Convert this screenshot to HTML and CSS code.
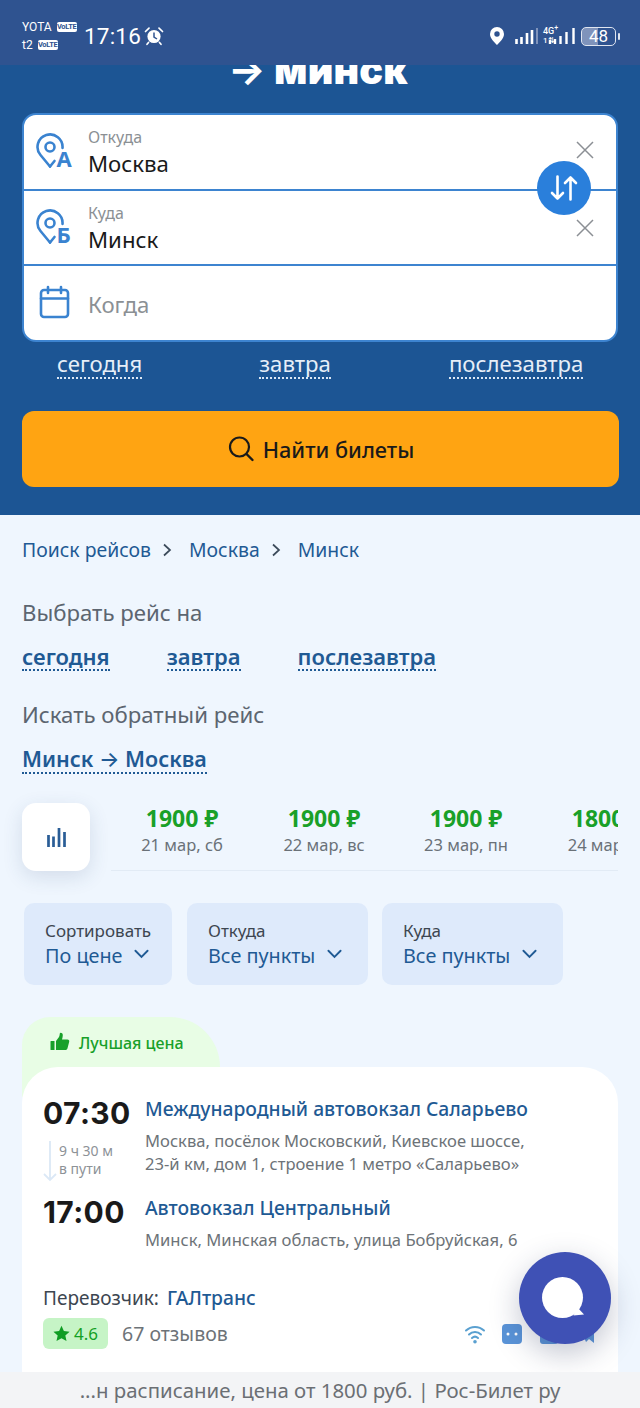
FILE: index.html
```html
<!DOCTYPE html>
<html lang="ru">
<head>
<meta charset="utf-8">
<title>Москва — Минск</title>
<link rel="stylesheet" href="styles.css">
</head>
<body>
<div class="app">
  <header class="status">
    <div class="sims">
      <div class="sim"><span>YOTA</span><b class="volte">VoLTE</b></div>
      <div class="sim"><span>t2</span><b class="volte">VoLTE</b></div>
    </div>
    <div class="clock">17:16</div>
    <svg class="alarm" width="20" height="20" viewBox="0 0 20 20"><circle cx="10" cy="10.5" r="6.6" fill="#fff"/><path d="M10 6.500v4.500l3 2" fill="none" stroke="#2f5390" stroke-width="1.500"/><path d="M1.500 5.500 5 2.200M18.500 5.500 15 2.200M4.500 16.500 3 18.300M15.500 16.500 17 18.300" stroke="#fff" stroke-width="1.700" stroke-linecap="round"/></svg>
    <div class="status-right">
      <svg class="pin" width="16" height="20" viewBox="0 0 16 20"><path fill-rule="evenodd" fill="#fff" d="M8 1a7 7 0 0 1 7 7c0 4.500-4.500 8.500-7 11-2.500-2.500-7-6.500-7-11a7 7 0 0 1 7-7Zm0 4.300a2.700 2.700 0 1 0 0 5.400 2.700 2.700 0 0 0 0-5.400Z"/></svg>
      <svg width="24" height="18" viewBox="0 0 24 18"><path stroke="#fff" stroke-width="2.600" d="M2.500 17v-5M7.500 17v-7M13 17V6M18 17V3"/><path stroke="#7f93bb" stroke-width="2" d="M23 17V1"/></svg>
      <div class="net"><span>4G<sup>+</sup></span><span class="net-sub">1⇅</span></div>
      <svg class="bars" width="28" height="18" viewBox="0 0 28 18"><path stroke="#fff" stroke-width="2.400" d="M3 17v-4M8 17v-5M13.500 17V9M19.500 17V5M26.500 17V1"/></svg>
      <div class="battery"><span>48</span></div><i class="battery-tip"></i>
    </div>
  </header>

  <main class="main">
    <section class="hero">
      <h1 class="hero-title"><span class="hero-arrow">→</span> минск</h1>
      <div class="search-box">
        <div class="field field-from">
          <svg class="pin-icon" width="40" height="44" viewBox="0 0 40 44"><path d="M14 33.500 4.500 22A12.500 12.500 0 1 1 26.500 15" fill="none" stroke="#3a83d0" stroke-width="2.600" stroke-linejoin="round" stroke-linecap="round"/><circle cx="14" cy="14" r="4.500" fill="none" stroke="#3a83d0" stroke-width="2.600"/><path d="m14 33.500 4.500-5.500" stroke="#3a83d0" stroke-width="2.600" stroke-linecap="round"/><text x="20.500" y="34" class="field-letter">А</text></svg>
          <div class="field-text"><div class="field-label">Откуда</div><div class="field-value">Москва</div></div>
          <svg class="clear" width="20" height="20" viewBox="0 0 20 20"><path d="m2 2 16 16M18 2 2 18" stroke="#8b8f94" stroke-width="1.500"/></svg>
        </div>
        <div class="field">
          <svg class="pin-icon" width="40" height="44" viewBox="0 0 40 44"><path d="M14 33.500 4.500 22A12.500 12.500 0 1 1 26.500 15" fill="none" stroke="#3a83d0" stroke-width="2.600" stroke-linejoin="round" stroke-linecap="round"/><circle cx="14" cy="14" r="4.500" fill="none" stroke="#3a83d0" stroke-width="2.600"/><path d="m14 33.500 4.500-5.500" stroke="#3a83d0" stroke-width="2.600" stroke-linecap="round"/><text x="20.500" y="34" class="field-letter">Б</text></svg>
          <div class="field-text"><div class="field-label">Куда</div><div class="field-value">Минск</div></div>
          <svg class="clear" width="20" height="20" viewBox="0 0 20 20"><path d="m2 2 16 16M18 2 2 18" stroke="#8b8f94" stroke-width="1.500"/></svg>
        </div>
        <div class="field field-when">
          <svg class="field-icon" width="38" height="38" viewBox="0 0 38 38"><rect x="5" y="6" width="27" height="27" rx="3" fill="none" stroke="#3a83d0" stroke-width="2.600"/><path d="M5 14.500h27M12 3v6M25 3v6" stroke="#3a83d0" stroke-width="2.600" stroke-linecap="round"/></svg>
          <div class="field-placeholder">Когда</div>
        </div>
        <button class="swap" type="button" aria-label="Поменять">
          <svg width="30" height="30" viewBox="0 0 30 30"><path d="M8.500 3.500v22M3 20l5.500 5.500L14 20M21.500 26.500V4.500M16 10l5.500-5.500L27 10" fill="none" stroke="#fff" stroke-width="2.600" stroke-linecap="round" stroke-linejoin="round"/></svg>
        </button>
      </div>
      <div class="quick">
        <a class="quick-link">сегодня</a><a class="quick-link">завтра</a><a class="quick-link">послезавтра</a>
      </div>
      <button class="find" type="button">
        <svg width="28" height="28" viewBox="0 0 28 28"><circle cx="12.500" cy="12" r="9.500" fill="none" stroke="#1a1a1a" stroke-width="2.200"/><path d="m19.500 19 6 6" stroke="#1a1a1a" stroke-width="2.400" stroke-linecap="round"/></svg>
        <span>Найти билеты</span>
      </button>
    </section>

    <section class="content">
      <nav class="crumbs">
        <a>Поиск рейсов</a>
        <svg width="10" height="14" viewBox="0 0 10 14"><path d="m2 1.500 6 5.500-6 5.500" fill="none" stroke="#3b4a5a" stroke-width="1.700"/></svg>
        <a>Москва</a>
        <svg width="10" height="14" viewBox="0 0 10 14"><path d="m2 1.500 6 5.500-6 5.500" fill="none" stroke="#3b4a5a" stroke-width="1.700"/></svg>
        <a>Минск</a>
      </nav>
      <h2 class="sub">Выбрать рейс на</h2>
      <div class="day-links"><a class="day-link">сегодня</a><a class="day-link">завтра</a><a class="day-link">послезавтра</a></div>
      <h2 class="sub sub-back">Искать обратный рейс</h2>
      <div class="day-links day-links-back"><a class="day-link day-link-back">Минск <span class="link-arrow">→</span> Москва</a></div>

      <div class="prices">
        <button class="chart" type="button" aria-label="График">
          <svg width="19" height="19" viewBox="0 0 19 19"><path d="M1.500 7v12M6.500 8.500V19M12 0v19M17.500 4v15" stroke="#2a5d96" stroke-width="2.700"/></svg>
        </button>
        <div class="price-list">
          <div class="price"><b>1900 ₽</b><span>21 мар, сб</span></div>
          <div class="price"><b>1900 ₽</b><span>22 мар, вс</span></div>
          <div class="price"><b>1900 ₽</b><span>23 мар, пн</span></div>
          <div class="price"><b>1800 ₽</b><span>24 мар, вт</span></div>
        </div>
      </div>

      <div class="filters">
        <div class="filter f1"><div class="filter-label">Сортировать</div><div class="filter-value">По цене<svg width="15" height="10" viewBox="0 0 16 10"><path d="m1.500 1.500 6.500 6.500 6.500-6.500" fill="none" stroke="#1f5a94" stroke-width="2" stroke-linecap="round"/></svg></div></div>
        <div class="filter f2"><div class="filter-label">Откуда</div><div class="filter-value">Все пункты<svg width="15" height="10" viewBox="0 0 16 10"><path d="m1.500 1.500 6.500 6.500 6.500-6.500" fill="none" stroke="#1f5a94" stroke-width="2" stroke-linecap="round"/></svg></div></div>
        <div class="filter f3"><div class="filter-label">Куда</div><div class="filter-value">Все пункты<svg width="15" height="10" viewBox="0 0 16 10"><path d="m1.500 1.500 6.500 6.500 6.500-6.500" fill="none" stroke="#1f5a94" stroke-width="2" stroke-linecap="round"/></svg></div></div>
      </div>

      <article class="offer">
        <div class="badge">
          <svg width="20" height="20" viewBox="0 0 20 20"><path fill="#18a02a" d="M1 9h3.500v9H1a.500.500 0 0 1-.500-.500v-8A.500.500 0 0 1 1 9Zm5 0 3-4c.500-1 .800-2.300.800-3.500 0-1.300 3-1 3 1.500 0 1.500-.400 3-.800 4.500h5.500c1.300 0 2 1 1.700 2.200l-1.700 6.500c-.300 1-1 1.800-2.300 1.800H6Z"/></svg>
          <span>Лучшая цена</span>
        </div>
        <div class="card">
          <div class="stop">
            <div class="time">07:30</div>
            <div class="stop-body">
              <div class="stop-name">Международный автовокзал Саларьево</div>
              <div class="stop-addr">Москва, посёлок Московский, Киевское шоссе,<br>23-й км, дом 1, строение 1 метро «Саларьево»</div>
            </div>
          </div>
          <div class="trip">
            <svg width="14" height="42" viewBox="0 0 14 42"><path d="M7 1v39M1 34l6 6 6-6" fill="none" stroke="#dbe8f6" stroke-width="1.800"/></svg>
            <div class="trip-text">9 ч 30 м<br>в пути</div>
          </div>
          <div class="stop stop-end">
            <div class="time">17:00</div>
            <div class="stop-body">
              <div class="stop-name">Автовокзал Центральный</div>
              <div class="stop-addr">Минск, Минская область, улица Бобруйская, 6</div>
            </div>
          </div>
          <div class="carrier"><span>Перевозчик:</span><a>ГАЛтранс</a></div>
          <div class="rating-row">
            <div class="rating"><svg width="17" height="17" viewBox="0 0 20 20"><path fill="#0f9d23" d="m10 1 2.800 6 6.700.800-5 4.500 1.400 6.600L10 15.500l-5.900 3.400 1.400-6.600-5-4.500L7.200 7Z"/></svg><span>4.6</span></div>
            <div class="reviews">67 отзывов</div>
            <div class="amenities">
              <svg width="24" height="22" viewBox="0 0 24 22"><path d="M3 7.500a13 13 0 0 1 18 0M6 11.500a8.500 8.500 0 0 1 12 0M9 15a4.500 4.500 0 0 1 6 0" fill="none" stroke="#5aa0d0" stroke-width="2" stroke-linecap="round"/><circle cx="12" cy="18.800" r="1.800" fill="#5aa0d0"/></svg>
              <svg width="20" height="20" viewBox="0 0 20 20"><rect width="20" height="20" rx="4" fill="#5a94d8"/><circle cx="6" cy="10" r="1.500" fill="#fff"/><circle cx="14" cy="10" r="1.500" fill="#fff"/></svg>
              <svg class="am-third" width="18" height="20" viewBox="0 0 18 20"><rect width="18" height="20" rx="3" fill="#5a94d8"/></svg>
              <svg class="am-fourth" width="12" height="20" viewBox="0 0 12 20"><path d="M0 9 12 2v17L7 15l-3 3Z" fill="#5a94d8"/></svg>
            </div>
          </div>
        </div>
      </article>
    </section>
    <button class="chat" type="button" aria-label="Чат">
      <svg width="46" height="42" viewBox="-20.500 -20.500 46 42"><circle r="20.500" fill="#fff"/><path d="M15 10l6.500 7-10.500 1Z" fill="#fff"/></svg>
    </button>
  </main>
  <footer class="page-title">...н расписание, цена от 1800 руб. | Рос-Билет ру</footer>
</div>
</body>
</html>
```
FILE: styles.css
```css
* { box-sizing: border-box; }
html, body { margin: 0; padding: 0; }
body { font-family: "Noto Sans", "Open Sans", sans-serif; background: #eff6fe; color: #1a1a1a; }
a { color: inherit; text-decoration: none; }
button { border: 0; padding: 0; font: inherit; cursor: pointer; }
h1, h2 { margin: 0; font-weight: 400; }

.app { width: 640px; height: 1408px; display: flex; flex-direction: column; overflow: hidden; }

/* status bar */
.status { height: 65px; flex: none; background: #2f5390; color: #fff; display: flex; align-items: center; padding: 7px 0 0 22px; }
.sims { width: 56px; font-family: "Roboto", sans-serif; font-size: 12px; line-height: 18px; }
.sim { display: flex; align-items: center; gap: 5px; white-space: nowrap; }
.volte { width: 20px; background: #fff; color: #2f5390; font-size: 7.500px; line-height: 10px; text-align: center; border-radius: 2px; font-weight: 700; letter-spacing: -.3px; overflow: hidden; }
.clock { font-family: "Roboto", sans-serif; font-size: 22.500px; margin-left: 6px; letter-spacing: .2px; }
.alarm { margin-left: 3px; }
.status-right { margin-left: auto; display: flex; align-items: center; padding-right: 20px; }
.pin { margin-right: 9px; }
.net { flex: none; font-family: "Roboto", sans-serif; font-size: 9px; line-height: 9px; width: 18px; margin-left: 5px; font-weight: 500; }
.net span { display: block; white-space: nowrap; }
.net sup { font-size: 7px; line-height: 0; }
.net-sub { font-size: 8px; }
.bars { margin-left: -14px; margin-right: 6px; }
.battery { width: 35px; height: 19px; border: 1.500px solid #dfe5f0; border-radius: 5px; display: flex; align-items: center; justify-content: center; font-family: "Roboto", sans-serif; font-size: 17px; background: linear-gradient(90deg, #7f93bb 48%, transparent 48%); }
.battery-tip { width: 2px; height: 7px; margin-left: 2px; background: #dfe5f0; border-radius: 1px; }

/* hero */
.main { flex: 1; min-height: 0; overflow: hidden; position: relative; }
.hero { height: 450px; background: #1c5594; padding: 0 22px; overflow: hidden; }
.hero-title { height: 48px; margin: 0; padding-left: 206px; color: #fff; font-family: "Inter", sans-serif; font-size: 39.500px; font-weight: 900; line-height: 11px; white-space: nowrap; letter-spacing: .2px; }
.hero-arrow { font-weight: 700; }

.search-box { position: relative; height: 229px; background: #fff; border: 2px solid #3d84d0; border-radius: 14px; }
.field { height: 75px; display: flex; align-items: center; padding: 0 21px 0 12px; border-bottom: 2.500px solid #3d84d0; }
.field-from { height: 76px; }
.field-when { border-bottom: 0; height: 74px; }
.field-icon { flex: none; width: 38px; height: 38px; }
.pin-icon { flex: none; width: 40px; height: 44px; margin: 6px -2px 0 0; }
.field-letter { font-family: "Noto Sans", sans-serif; font-size: 22px; font-weight: 700; fill: #3a83d0; }
.field-text { margin-left: 14px; flex: 1; padding-top: 3px; }
.field-label { font-size: 16px; line-height: 20px; color: #8b9094; }
.field-value { font-size: 22.200px; line-height: 33px; color: #1a1a1a; }
.field-placeholder { margin-left: 14px; font-size: 22.200px; padding-top: 3px; color: #8b9094; }
.clear { flex: none; }
.field-from .clear { margin-bottom: 5px; }
.swap { position: absolute; right: 25px; top: 46px; width: 54px; height: 54px; border-radius: 50%; background: #2a7fdb; display: flex; align-items: center; justify-content: center; }

.quick { display: flex; height: 69px; padding: 9px 0 0 35px; align-items: flex-start; }
.quick-link { color: #e6eef8; font-size: 22.200px; line-height: 26px; border-bottom: 2px dotted #dbe7f5; }
.quick-link:nth-child(2) { margin-left: 117px; }
.quick-link:nth-child(3) { margin-left: 118px; }

.find { width: 597px; height: 76px; background: #ffa412; border-radius: 12px; display: flex; align-items: center; justify-content: center; gap: 8px; font-size: 21.700px; color: #1a1a1a; font-weight: 500; }

/* content */
.content { padding: 0 22px; }
.crumbs { height: 68px; display: flex; align-items: center; font-size: 19.400px; color: #1f5a94; }
.crumbs svg { margin: 2px 17px 0 11px; }
.sub { font-size: 22.200px; line-height: 30px; color: #5c6570; margin-top: 15px; }
.sub-back { margin-top: 29px; }
.day-links { display: flex; gap: 57px; margin-top: 15px; height: 28px; }
.day-link { font-size: 22px; line-height: 26px; font-weight: 600; color: #1f5a94; border-bottom: 2px dotted #1f5a94; }
.day-link-back { font-size: 21.500px; white-space: nowrap; }
.link-arrow { font-family: "Inter", sans-serif; font-weight: 500; }
.day-links-back { margin-top: 16px; }

.prices { display: flex; margin-top: 29px; height: 68px; }
.chart { flex: none; width: 68px; height: 68px; background: #fff; border-radius: 14px; box-shadow: 0 6px 20px rgba(40, 70, 110, .14); display: flex; align-items: center; justify-content: center; }
.price-list { margin-left: 21px; flex: 1; display: flex; overflow: hidden; border-bottom: 1.500px solid #e2ebf5; height: 68px; }
.price { flex: none; width: 142px; display: flex; flex-direction: column; align-items: center; white-space: nowrap; }
.price b { font-size: 23px; line-height: 30px; color: #19a028; font-weight: 700; }
.price span { font-size: 16.500px; line-height: 24px; color: #6a7178; }

.filters { display: flex; margin: 32px 0 0 2px; gap: 15px; }
.filter { height: 82px; background: #deeafb; border-radius: 10px; padding: 16px 0 0 21px; }
.f1 { width: 148px; }
.f2 { width: 181px; }
.f3 { width: 181px; margin-left: -1px; }
.filter-label { font-size: 17px; line-height: 24px; color: #3d4650; }
.filter-value { font-size: 19.800px; line-height: 25px; color: #1f5a94; display: flex; align-items: center; gap: 12px; white-space: nowrap; }
.filter-value svg { margin-bottom: 4px; }

.offer { margin-top: 32px; }
.badge { width: 198px; height: 80px; margin-bottom: -30px; background: #e8fde5; border-radius: 28px 50px 0 0; display: flex; align-items: flex-start; gap: 9px; padding: 15px 0 0 28px; color: #18a02a; font-size: 16px; line-height: 22px; font-weight: 500; white-space: nowrap; }
.badge svg { flex: none; }
.card { position: relative; height: 305px; background: #fff; border-radius: 36px 36px 0 0; padding: 28px 0 0 21px; }
.stop { display: flex; }
.time { width: 102px; font-family: "Inter", sans-serif; font-size: 30px; line-height: 36px; font-weight: 700; color: #1a1a1a; letter-spacing: .4px; white-space: nowrap; flex: none; }
.stop-body { flex: 1; }
.stop-name { font-size: 19.300px; line-height: 28px; color: #1f5a94; font-weight: 500; white-space: nowrap; }
.stop-addr { font-size: 16.600px; line-height: 23px; color: #6d7378; margin-top: 6px; white-space: nowrap; }
.trip { display: flex; gap: 2px; margin-top: -35px; height: 44px; }
.trip-text { font-size: 14px; line-height: 18px; color: #8d9297; padding-top: 2px; }
.stop-end { margin-top: 10px; }
.carrier { display: flex; gap: 8px; margin-top: 34px; font-size: 19px; line-height: 26px; color: #3d4650; }
.carrier a { color: #1f5a94; font-weight: 500; font-size: 19.300px; }
.rating-row { display: flex; align-items: center; margin-top: 7px; }
.rating { width: 65px; height: 31px; background: #c6f4c6; border-radius: 6px; display: flex; align-items: center; justify-content: center; gap: 4px; color: #13a024; font-size: 17px; }
.reviews { margin-left: 14px; font-size: 19.500px; color: #6d7378; }
.amenities { margin-left: auto; margin-right: 24px; display: flex; align-items: center; gap: 15px; }
.am-third { margin-left: 3px; }
.am-fourth { margin-left: 9px; }

.chat { position: absolute; left: 519px; top: 1187px; width: 92px; height: 92px; border-radius: 50%; background: #3f51b5; box-shadow: 0 10px 30px rgba(40, 50, 90, .28); display: flex; align-items: center; justify-content: center; }

.page-title { height: 36px; flex: none; background: #f3f4f6; color: #6b6f74; font-size: 20.400px; line-height: 36px; text-align: center; white-space: nowrap; }
```
